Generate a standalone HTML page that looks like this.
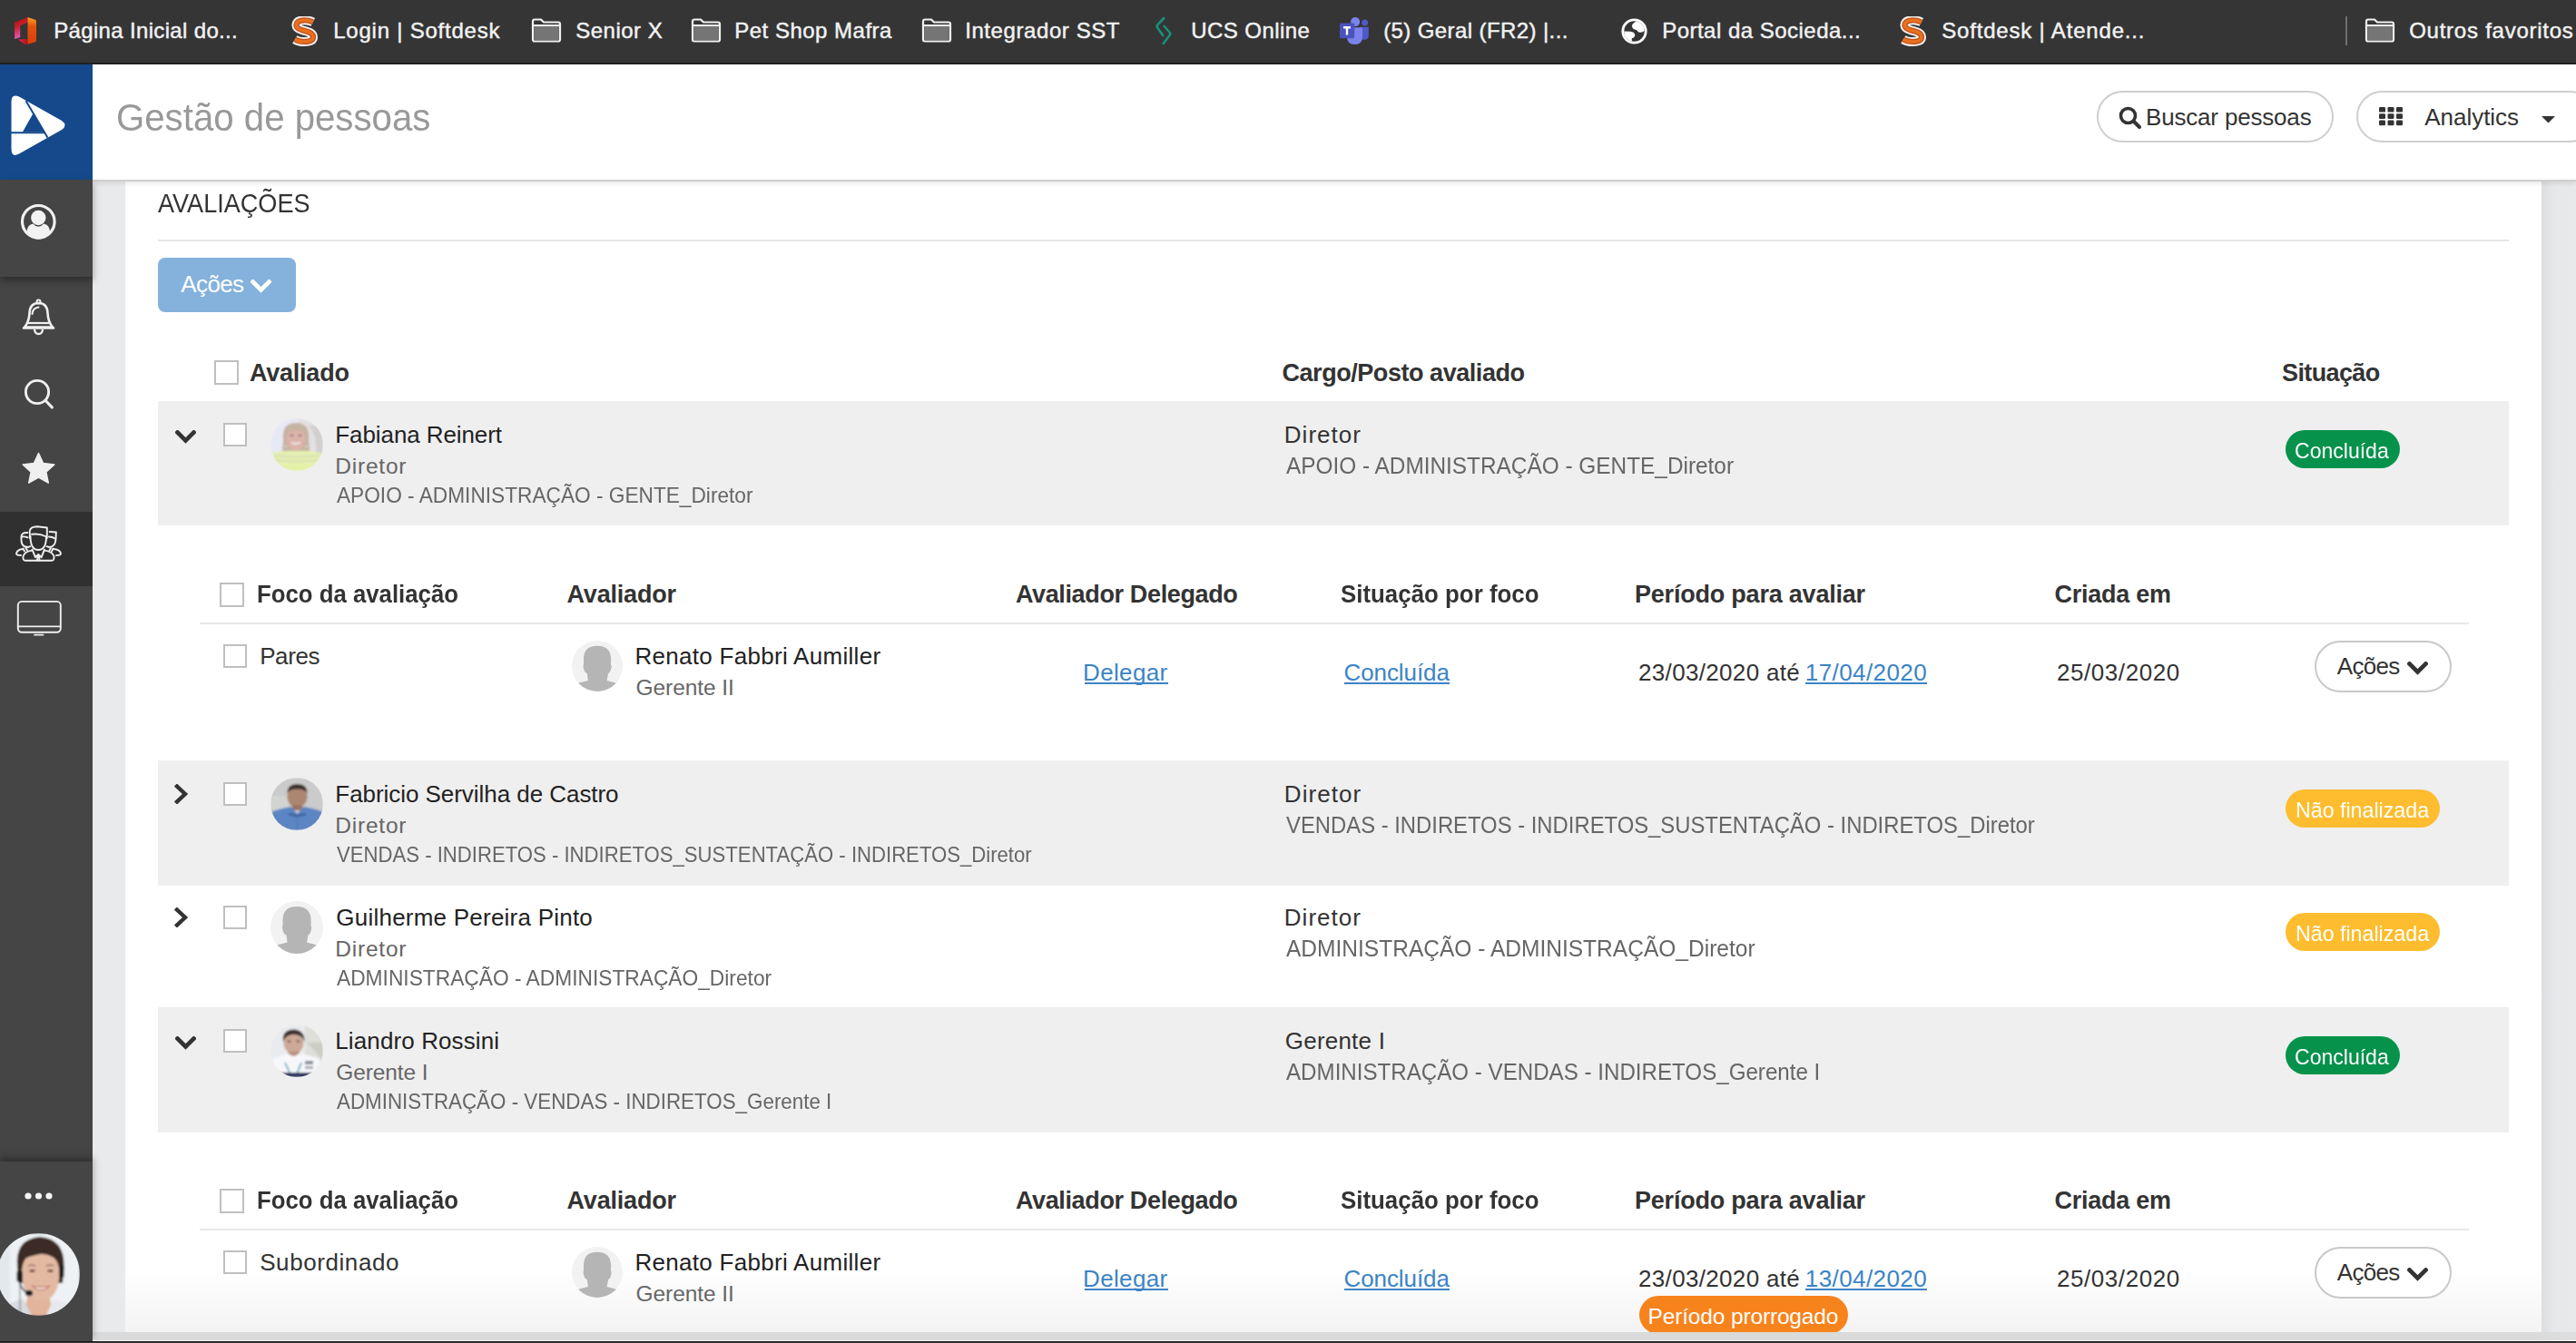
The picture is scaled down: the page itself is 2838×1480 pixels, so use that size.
<!DOCTYPE html><html><head><meta charset="utf-8"><style>
html,body{margin:0;padding:0;width:2838px;height:1480px;overflow:hidden;background:#e9eaec;font-family:'Liberation Sans', sans-serif}
.ab{position:absolute;line-height:0}
.ab svg{display:block}
.t{position:absolute;white-space:pre;font-family:'Liberation Sans', sans-serif}
.cb{position:absolute;border:2px solid #bfbfbf;background:#fff}
.ob{position:absolute;border:2px solid #c9c9c9;border-radius:30px;background:#fff}
.bx{position:absolute}
</style></head><body>
<div class="bx" style="left:0;top:0;width:2838px;height:69px;background:#353535"></div>
<div class="bx" style="left:0;top:69px;width:2838px;height:2px;background:#202020"></div>
<div class="ab" style="left:10px;top:15px"><svg width="40" height="40" viewBox="0 0 40 40"><defs>
<linearGradient id="ogr" x1="0" y1="0" x2="0" y2="1"><stop offset="0" stop-color="#f7a21e"/><stop offset="0.35" stop-color="#e5500e"/><stop offset="1" stop-color="#d9400a"/></linearGradient>
<linearGradient id="ogl" x1="0" y1="0" x2="0.3" y2="1"><stop offset="0" stop-color="#a30f14"/><stop offset="0.45" stop-color="#c81e2c"/><stop offset="1" stop-color="#e65fc0"/></linearGradient>
<linearGradient id="ogb" x1="0" y1="0" x2="1" y2="0"><stop offset="0" stop-color="#f52a4e"/><stop offset="1" stop-color="#a8101c"/></linearGradient></defs>
<path d="M6 9.8 L20.5 3.9 V9.8 L12.2 13.1 V25.9 L6 28 Z" fill="url(#ogl)"/>
<path d="M10 28.6 L20.5 28 V33.7 L17.5 33.9 Z" fill="url(#ogb)"/>
<path d="M20.5 3.9 L29 6.8 Q30 7.3 30 8.5 V30 Q30 31 29 31.3 L20.5 33.7 Z" fill="url(#ogr)"/>
</svg></div>
<div class="ab" style="left:320px;top:17.6px"><svg width="34" height="34" viewBox="0 0 34 34"><path d="M24.8 6.4 Q20 4 14.5 4.3 Q6.6 4.7 6.4 9.8 Q6.4 13.2 13 15.2 L18.5 16.8 Q25 18.7 25 22.8 Q25 28 15 28 Q9 28 4.8 25.4" fill="none" stroke="#f6f1f1" stroke-width="10" stroke-linecap="butt" stroke-linejoin="round"/><path d="M24.8 6.4 Q20 4 14.5 4.3 Q6.6 4.7 6.4 9.8 Q6.4 13.2 13 15.2 L18.5 16.8 Q25 18.7 25 22.8 Q25 28 15 28 Q9 28 4.8 25.4" fill="none" stroke="#c0521a" stroke-width="6.2" stroke-linecap="butt"/><path d="M24.8 6.4 Q20 4 14.5 4.3 Q6.6 4.7 6.4 9.8 Q6.4 13.2 13 15.2 L18.5 16.8 Q25 18.7 25 22.8 Q25 28 15 28 Q9 28 4.8 25.4" fill="none" stroke="#e8701f" stroke-width="3.6"/></svg></div>
<div class="ab" style="left:585px;top:20px"><svg width="34" height="27" viewBox="0 0 34 27"><path d="M2 3.5 Q2 1.5 4 1.5 H11 L14 4.5 H30 Q32 4.5 32 6.5 V23.5 Q32 25.5 30 25.5 H4 Q2 25.5 2 23.5 Z" fill="none" stroke="#f2f2f2" stroke-width="2.2"/><rect x="3.2" y="9" width="27.6" height="15.3" fill="#757575"/><line x1="2" y1="8" x2="32" y2="8" stroke="#f2f2f2" stroke-width="2"/></svg></div>
<div class="ab" style="left:761px;top:20px"><svg width="34" height="27" viewBox="0 0 34 27"><path d="M2 3.5 Q2 1.5 4 1.5 H11 L14 4.5 H30 Q32 4.5 32 6.5 V23.5 Q32 25.5 30 25.5 H4 Q2 25.5 2 23.5 Z" fill="none" stroke="#f2f2f2" stroke-width="2.2"/><rect x="3.2" y="9" width="27.6" height="15.3" fill="#757575"/><line x1="2" y1="8" x2="32" y2="8" stroke="#f2f2f2" stroke-width="2"/></svg></div>
<div class="ab" style="left:1015px;top:20px"><svg width="34" height="27" viewBox="0 0 34 27"><path d="M2 3.5 Q2 1.5 4 1.5 H11 L14 4.5 H30 Q32 4.5 32 6.5 V23.5 Q32 25.5 30 25.5 H4 Q2 25.5 2 23.5 Z" fill="none" stroke="#f2f2f2" stroke-width="2.2"/><rect x="3.2" y="9" width="27.6" height="15.3" fill="#757575"/><line x1="2" y1="8" x2="32" y2="8" stroke="#f2f2f2" stroke-width="2"/></svg></div>
<div class="ab" style="left:1270px;top:16px"><svg width="24" height="36" viewBox="0 0 24 36"><path d="M12.2 4 L5.3 11.5 Q3.8 13.3 5.5 15 L11.2 23" fill="none" stroke="#17917a" stroke-width="2.6" stroke-linecap="round" stroke-linejoin="round"/><path d="M12.7 13 L18.5 19.5 Q20 21.3 18.5 23 L11.7 32" fill="none" stroke="#17917a" stroke-width="2.6" stroke-linecap="round" stroke-linejoin="round"/></svg></div>
<div class="ab" style="left:1474px;top:17px"><svg width="36" height="34" viewBox="0 0 36 34"><circle cx="29.7" cy="8.1" r="3.5" fill="#5059c9"/><path d="M24 12.7 H33.8 V22 Q33.8 26.8 29 26.8 Q24 26.8 24 22 Z" fill="#5059c9"/><circle cx="19.1" cy="7.1" r="5" fill="#7b83eb"/><path d="M10 13.2 H27 V24 Q27 31.9 18.5 31.9 Q10 31.9 10 24 Z" fill="#7b83eb"/><rect x="2" y="8.6" width="16.2" height="16.7" rx="1.5" fill="#4b53bc"/><path d="M6 13.2 H14 M10 13.2 V21.5" stroke="#fff" stroke-width="2.4"/></svg></div>
<div class="ab" style="left:1784.5px;top:18.5px"><svg width="31" height="31" viewBox="0 0 31 31"><clipPath id="gcl"><circle cx="15.5" cy="15.5" r="11.2"/></clipPath><circle cx="15.5" cy="15.5" r="14.1" fill="#fff"/><circle cx="15.5" cy="15.5" r="11.2" fill="#353535"/><g clip-path="url(#gcl)" fill="#fff"><path d="M16.8 3.5 L16.77 4.9 Q12.5 7.5 13.05 10.1 Q13.3 13.3 18.26 14.2 Q19.5 16.8 22 16.8 Q25 16.5 26.5 15 L28 3 Z"/><path d="M2 15.3 L11.56 15.7 Q16 16.5 16.2 19.5 Q16.4 22.5 12.68 23.15 L13.05 28 L2 28 Z"/></g></svg></div>
<div class="ab" style="left:2092px;top:17.6px"><svg width="34" height="34" viewBox="0 0 34 34"><path d="M24.8 6.4 Q20 4 14.5 4.3 Q6.6 4.7 6.4 9.8 Q6.4 13.2 13 15.2 L18.5 16.8 Q25 18.7 25 22.8 Q25 28 15 28 Q9 28 4.8 25.4" fill="none" stroke="#f6f1f1" stroke-width="10" stroke-linecap="butt" stroke-linejoin="round"/><path d="M24.8 6.4 Q20 4 14.5 4.3 Q6.6 4.7 6.4 9.8 Q6.4 13.2 13 15.2 L18.5 16.8 Q25 18.7 25 22.8 Q25 28 15 28 Q9 28 4.8 25.4" fill="none" stroke="#c0521a" stroke-width="6.2" stroke-linecap="butt"/><path d="M24.8 6.4 Q20 4 14.5 4.3 Q6.6 4.7 6.4 9.8 Q6.4 13.2 13 15.2 L18.5 16.8 Q25 18.7 25 22.8 Q25 28 15 28 Q9 28 4.8 25.4" fill="none" stroke="#e8701f" stroke-width="3.6"/></svg></div>
<div class="bx" style="left:2584px;top:18px;width:1.5px;height:32px;background:#6e6e6e"></div>
<div class="ab" style="left:2605px;top:20px"><svg width="34" height="27" viewBox="0 0 34 27"><path d="M2 3.5 Q2 1.5 4 1.5 H11 L14 4.5 H30 Q32 4.5 32 6.5 V23.5 Q32 25.5 30 25.5 H4 Q2 25.5 2 23.5 Z" fill="none" stroke="#f2f2f2" stroke-width="2.2"/><rect x="3.2" y="9" width="27.6" height="15.3" fill="#757575"/><line x1="2" y1="8" x2="32" y2="8" stroke="#f2f2f2" stroke-width="2"/></svg></div>
<div class="bx" style="left:138px;top:198px;width:2662px;height:1270px;background:linear-gradient(to bottom,#fff 0,#fff 1200px,#f3f3f3 1270px)"></div>
<div class="bx" style="left:102px;top:1477px;width:2736px;height:1px;background:#f4f4f4"></div><div class="bx" style="left:0;top:1478px;width:2838px;height:1px;background:#1a1a1a"></div><div class="bx" style="left:0;top:1479px;width:2838px;height:1px;background:#3a3a3a"></div>
<div class="bx" style="left:2800px;top:198px;width:38px;height:1270px;background:linear-gradient(to right,#dddee1 0,#e7e8ea 14px,#e8e9eb 38px)"></div>
<div class="bx" style="left:102px;top:1468px;width:2736px;height:9px;background:linear-gradient(to right,#dadada 0,#dadada 2680px,#e4e4e4 2838px)"></div>
<div class="bx" style="left:102px;top:71px;width:2736px;height:127px;background:#fff;box-shadow:0 2px 0 #cfcfcf,0 4px 5px rgba(0,0,0,0.10)"></div>
<div class="bx" style="left:2310px;top:100px;width:257px;height:53px;border:2px solid #cfcfcf;border-radius:30px;background:#fff"></div>
<div class="bx" style="left:2596px;top:100px;width:260px;height:53px;border:2px solid #cfcfcf;border-radius:30px;background:#fff"></div>
<div class="ab" style="left:2334px;top:117px"><svg width="26" height="26" viewBox="0 0 26 26"><circle cx="10.5" cy="10.5" r="8" fill="none" stroke="#333" stroke-width="3.6"/><path d="M16.5 16.5 L23 23" stroke="#333" stroke-width="4" stroke-linecap="round"/></svg></div>
<div class="ab" style="left:2620px;top:117px"><svg width="28" height="23" viewBox="0 0 28 23"><rect x="1.0" y="1.0" width="7" height="5.6" rx="1.2" fill="#333"/><rect x="10.5" y="1.0" width="7" height="5.6" rx="1.2" fill="#333"/><rect x="20.0" y="1.0" width="7" height="5.6" rx="1.2" fill="#333"/><rect x="1.0" y="8.3" width="7" height="5.6" rx="1.2" fill="#333"/><rect x="10.5" y="8.3" width="7" height="5.6" rx="1.2" fill="#333"/><rect x="20.0" y="8.3" width="7" height="5.6" rx="1.2" fill="#333"/><rect x="1.0" y="15.6" width="7" height="5.6" rx="1.2" fill="#333"/><rect x="10.5" y="15.6" width="7" height="5.6" rx="1.2" fill="#333"/><rect x="20.0" y="15.6" width="7" height="5.6" rx="1.2" fill="#333"/></svg></div>
<div class="ab" style="left:2799px;top:127px"><svg width="17" height="9" viewBox="0 0 17 9"><path d="M1 1 H16 L8.5 8.5 Z" fill="#333"/></svg></div>
<div class="bx" style="left:0;top:71px;width:102px;height:1407px;background:#454545"></div>
<div class="bx" style="left:0;top:71px;width:102px;height:127px;background:#15498b"></div>
<div class="bx" style="left:0;top:198px;width:102px;height:107px;background:#454545;box-shadow:0 4px 8px rgba(0,0,0,0.35)"></div>
<div class="bx" style="left:0;top:564px;width:102px;height:82px;background:#303030"></div>
<div class="bx" style="left:0;top:1280px;width:102px;height:198px;background:#454545;box-shadow:0 -4px 8px rgba(0,0,0,0.35)"></div>
<div class="ab" style="left:0;top:90px"><svg width="90" height="100" viewBox="0 0 90 100"><path d="M12.5 22 Q12.5 13 21 16.5 L68 43 Q75 48 68 53 L21 79.5 Q12.5 84 12.5 74 Z" fill="#fff"/>
<path d="M36.5 35 L24.9 55.5 L49.1 55.5 Z" fill="#15498b"/>
<path d="M12 56.2 H50" stroke="#15498b" stroke-width="2"/>
<path d="M28.5 21 L52.5 61.8" stroke="#15498b" stroke-width="2"/></svg></div>
<div class="ab" style="left:22px;top:224px"><svg width="41" height="41" viewBox="0 0 41 41"><circle cx="20.3" cy="20.3" r="17.8" fill="none" stroke="#f2f2f2" stroke-width="3.1"/><circle cx="20.3" cy="16" r="8.2" fill="#f2f2f2"/><path d="M7.3 33.5 Q7.5 23.5 14.5 22.5 Q17 25.8 20.3 25.8 Q23.6 25.8 26.1 22.5 Q33 23.5 33.3 33.5 Q27.5 39.5 20.3 39.5 Q13 39.5 7.3 33.5 Z" fill="#f2f2f2"/></svg></div>
<div class="ab" style="left:24px;top:329px"><svg width="37" height="41" viewBox="0 0 37 41"><path d="M18.5 5 Q28 5 28.5 16 Q29 26 34 31.5 H3 Q8 26 8.5 16 Q9 5 18.5 5Z" fill="none" stroke="#f0f0f0" stroke-width="2.6" stroke-linejoin="round"/><path d="M2 32.5 H35" stroke="#f0f0f0" stroke-width="2.6" stroke-linecap="round"/><circle cx="18.5" cy="3.5" r="2" fill="none" stroke="#f0f0f0" stroke-width="2"/><path d="M14 34 Q14.5 39 18.5 39 Q22.5 39 23 34" fill="none" stroke="#f0f0f0" stroke-width="2.4"/><path d="M7 27 H30" stroke="#f0f0f0" stroke-width="2.2"/><path d="M11.5 17 Q12 10.5 18.5 9.6" fill="none" stroke="#f0f0f0" stroke-width="2" stroke-linecap="round"/></svg></div>
<div class="ab" style="left:25px;top:417px"><svg width="35" height="35" viewBox="0 0 35 35"><circle cx="16" cy="15" r="12.6" fill="none" stroke="#f0f0f0" stroke-width="2.9"/><path d="M25.2 24.5 L32.3 31.8" stroke="#f0f0f0" stroke-width="3.2" stroke-linecap="round"/></svg></div>
<div class="ab" style="left:23px;top:498px"><svg width="39" height="38" viewBox="0 0 39 38"><path d="M19.5 1.5 L24.6 12.6 L36.8 13.9 L27.8 22.1 L30.3 34.1 L19.5 28 L8.7 34.1 L11.2 22.1 L2.2 13.9 L14.4 12.6 Z" fill="#f0f0f0" stroke="#f0f0f0" stroke-width="1.5" stroke-linejoin="round"/></svg></div>
<div class="ab" style="left:10px;top:570px"><svg width="65" height="60" viewBox="0 0 65 60"><g fill="none" stroke="#f0f0f0" stroke-width="1.9" stroke-linejoin="round" stroke-linecap="round">
<path d="M22.8 23 L22.8 15 Q23.5 10.5 31 10.3 L41.8 11.5 L41.8 23"/>
<path d="M23.5 21 Q23.5 36 32.2 36 Q41 36 41 21"/>
<path d="M25 18.8 Q33 17.5 40 21"/>
<path d="M20.3 17 Q13.4 16.5 13.4 22 L13.6 27 Q14.5 33 21 33 L23.2 32.2"/>
<path d="M14 21.5 Q18 21 20.5 22.3"/>
<path d="M44.7 16 L51.8 16.5 L51.5 24 Q51 33 44 33 L41.5 32.2"/>
<path d="M44 21.5 Q48 21.5 50.5 23.5"/>
<path d="M25 36.6 Q17 38 15.5 43 Q15 47.8 18 47.8 H47 Q50 47.8 49.5 43 Q48 38 39.3 36.6"/>
<path d="M25.5 35.7 L29 44.2 L32.2 41 L35.7 44.2 L38.9 35.7"/>
<path d="M31 47.5 L31.5 43 H33 L33.5 47.5"/>
<path d="M15 35 Q8.5 36 8 40 Q8 42 13 42"/><path d="M15.5 34.5 L17 37.5 M18.5 34 L20 36.5"/>
<path d="M49.5 35 Q56.5 36 57 40 Q57 42 52 42"/><path d="M48.5 34.5 L47 37.5 M46 34 L44.5 36.5"/>
</g></svg></div>
<div class="ab" style="left:17px;top:661px"><svg width="51" height="42" viewBox="0 0 51 42"><rect x="2.8" y="1.9" width="47" height="33.8" rx="4.2" fill="none" stroke="#f0f0f0" stroke-width="1.9"/><path d="M2.8 29.4 H49.8" stroke="#f0f0f0" stroke-width="1.8"/><path d="M21 38.6 H30.5" stroke="#f0f0f0" stroke-width="1.8" stroke-linecap="round"/></svg></div>
<div class="ab" style="left:27px;top:1313px"><svg width="32" height="10" viewBox="0 0 32 10"><circle cx="4" cy="5" r="3.6" fill="#f4f4f4"/><circle cx="15.5" cy="5" r="3.6" fill="#f4f4f4"/><circle cx="27" cy="5" r="3.6" fill="#f4f4f4"/></svg></div>
<div class="ab" style="left:-3px;top:1359px"><svg width="91" height="91" viewBox="0 0 91 91"><defs><filter id="sbl" x="-5%" y="-5%" width="110%" height="110%"><feGaussianBlur stdDeviation="1"/></filter></defs><clipPath id="sav"><circle cx="45.5" cy="45.5" r="45.5"/></clipPath><g clip-path="url(#sav)"><g filter="url(#sbl)">
<rect width="91" height="91" fill="#eef2f4"/><rect x="0" width="14" height="91" fill="#e2e8ec"/>
<path d="M22 38 Q19 6 47 4 Q74 6 73.5 36 L72 55 L24 55 Z" fill="#3b2b25"/>
<path d="M33 64 H61 L58 72 L62 91 H28 L33 72 Z" fill="#e2b49c"/>
<path d="M27 44 Q27 22 47 20 Q68 22 68.5 44 Q68 66 57 72 Q48 76 39 72 Q28 66 27 44Z" fill="#e3b9a2"/>
<path d="M26 30 Q34 12 52 14 Q66 17 69 34 Q60 22 48 23 Q35 25 26 30Z" fill="#3b2b25"/>
<ellipse cx="38.5" cy="41.5" rx="3.2" ry="1.5" fill="#6b4b42"/><ellipse cx="58.5" cy="41.5" rx="3.2" ry="1.5" fill="#6b4b42"/>
<path d="M34 36 Q38 34 42 36 M54 36 Q58 34 62 36" stroke="#6a4a40" stroke-width="1.2" fill="none"/>
<path d="M38 58 Q48 67 58 58 Q48 61 38 58Z" fill="#fff" stroke="#c77b6b" stroke-width="1.3"/>
<path d="M0 91 L6 82 Q16 76 28 72 L38 91 Z" fill="#d6dbe0"/><path d="M91 91 L86 82 Q74 76 62 72 L54 91 Z" fill="#e6eaee"/>
<rect x="21.5" y="41" width="6.5" height="13" rx="3" fill="#1f1f1f"/><rect x="68" y="35" width="5.5" height="14" rx="2.5" fill="#1f1f1f"/>
<path d="M24.5 54 Q27 63 34 66" stroke="#222" stroke-width="1.5" fill="none"/><ellipse cx="35" cy="66" rx="4.2" ry="3.2" fill="#1a1a1a"/>
<path d="M25 55 V91" stroke="#555" stroke-width="0.8"/>
</g></g></svg></div>
<div class="bx" style="left:174px;top:264px;width:2590px;height:2px;background:#e5e5e5"></div>
<div class="bx" style="left:174px;top:284px;width:152px;height:60px;border-radius:8px;background:#84b2dc"></div>
<div class="ab" style="left:276px;top:308px"><svg width="23" height="15" viewBox="0 0 23 15"><path d="M2.5 2.5 L11.5 11.5 L20.5 2.5" fill="none" stroke="#fff" stroke-width="4.6" stroke-linecap="square" stroke-linejoin="miter"/></svg></div>
<div class="cb" style="left:236px;top:397px;width:23px;height:23px"></div>
<div class="bx" style="left:174px;top:442px;width:2590px;height:137px;background:#efefef"></div>
<div class="bx" style="left:174px;top:838px;width:2590px;height:138px;background:#efefef"></div>
<div class="bx" style="left:174px;top:1110px;width:2590px;height:138px;background:#efefef"></div>
<div class="ab" style="left:193px;top:474px"><svg width="23" height="15" viewBox="0 0 23 15"><path d="M2.5 2.5 L11.5 11.5 L20.5 2.5" fill="none" stroke="#333" stroke-width="4.6" stroke-linecap="square" stroke-linejoin="miter"/></svg></div>
<div class="cb" style="left:246px;top:466px;width:22px;height:22px"></div>
<div class="ab" style="left:192px;top:864px"><svg width="16" height="22" viewBox="0 0 16 22"><path d="M3 2.5 L12 11 L3 19.5" fill="none" stroke="#333" stroke-width="4.4" stroke-linecap="square"/></svg></div>
<div class="cb" style="left:246px;top:862px;width:22px;height:22px"></div>
<div class="ab" style="left:192px;top:1000px"><svg width="16" height="22" viewBox="0 0 16 22"><path d="M3 2.5 L12 11 L3 19.5" fill="none" stroke="#333" stroke-width="4.4" stroke-linecap="square"/></svg></div>
<div class="cb" style="left:246px;top:998px;width:22px;height:22px"></div>
<div class="ab" style="left:193px;top:1142px"><svg width="23" height="15" viewBox="0 0 23 15"><path d="M2.5 2.5 L11.5 11.5 L20.5 2.5" fill="none" stroke="#333" stroke-width="4.6" stroke-linecap="square" stroke-linejoin="miter"/></svg></div>
<div class="cb" style="left:246px;top:1134px;width:22px;height:22px"></div>
<div class="ab" style="left:298px;top:461px"><svg width="58" height="58" viewBox="0 0 58 58"><defs><filter id="bl0" x="-10%" y="-10%" width="120%" height="120%"><feGaussianBlur stdDeviation="0.9"/></filter></defs><clipPath id="cp0"><circle cx="29" cy="29" r="29"/></clipPath><g clip-path="url(#cp0)"><g filter="url(#bl0)"><rect width="58" height="58" fill="#e8e9f6"/><rect x="30" width="28" height="58" fill="#e4e1e2"/><path d="M42 8 Q52 20 50 40 L58 40 V8Z" fill="#d3cfcf"/>
<path d="M14 24 Q12 5 28 5 Q44 5 42 24 L43 36 L13 36 Z" fill="#c4b4a2"/>
<ellipse cx="28" cy="23" rx="10.5" ry="12.5" fill="#dcb3a8"/>
<path d="M18 16 Q28 9 38 16 L38 11 Q28 6 18 11Z" fill="#c4b4a2"/>
<ellipse cx="23.5" cy="19" rx="2.2" ry="1" fill="#8d7080"/><ellipse cx="32.5" cy="19" rx="2.2" ry="1" fill="#8d7080"/>
<path d="M23 26.5 Q28 29.5 33 26.5" stroke="#f4eaea" stroke-width="2" fill="none"/>
<circle cx="16.5" cy="31" r="1" fill="#e6e6e6"/><circle cx="39.5" cy="31" r="1" fill="#e6e6e6"/>
<path d="M0 58 L2 38 Q14 35 28 36 Q42 35 56 38 L58 58 Z" fill="#e4f0b0"/>
<path d="M4 41 Q28 44 54 41 M3 46 Q28 49 55 46" stroke="#d8dcb4" stroke-width="1.4" fill="none"/>
<rect x="0" y="51" width="58" height="7" fill="#e3f3a6"/></g></g></svg></div>
<div class="ab" style="left:298px;top:857px"><svg width="58" height="58" viewBox="0 0 58 58"><defs><filter id="bl1" x="-10%" y="-10%" width="120%" height="120%"><feGaussianBlur stdDeviation="0.9"/></filter></defs><clipPath id="cp1"><circle cx="29" cy="29" r="29"/></clipPath><g clip-path="url(#cp1)"><g filter="url(#bl1)"><rect width="58" height="58" fill="#cbcbcb"/><rect x="0" y="20" width="20" height="20" fill="#d2d4d2"/>
<ellipse cx="29.5" cy="21" rx="11" ry="12" fill="#ad8672"/>
<path d="M18.5 17 Q18.5 7 29.5 7 Q40.5 7 40.5 17 Q38 12.5 29.5 12.5 Q21 12.5 18.5 17Z" fill="#3b322e"/>
<rect x="24" y="30" width="11" height="6" fill="#9c7563"/>
<path d="M0 58 L2 37 Q15 33 23 32 L29.5 40 L36 32 Q44 33 57 37 L58 58 Z" fill="#5b85c4"/>
<path d="M20 40 L29.5 42 L39 40" stroke="#3c5f9c" stroke-width="2.5" fill="none"/>
<path d="M29.5 42 V58" stroke="#4a6fae" stroke-width="1"/></g></g></svg></div>
<div class="ab" style="left:298px;top:993px"><svg width="58" height="58" viewBox="0 0 58 58"><clipPath id="cpd298993"><circle cx="29" cy="29" r="29"/></clipPath><g clip-path="url(#cpd298993)"><rect width="58" height="58" fill="#f2f2f2"/><path fill="#b5b5b5" d="M13.5 21 Q13.5 6 29 6 Q44.7 6 44.7 22 L44.5 27 Q45.6 28.5 45 31 Q44 36 41.5 37.5 L40 45.5 Q48 47.5 56 50 L58 58 L0 58 L2 50 Q10 47.5 18.5 45.5 L17.5 37.5 Q14 36 13.3 31 Q12.6 28.5 13.5 27 Z"/></g></svg></div>
<div class="ab" style="left:298px;top:1129px"><svg width="58" height="58" viewBox="0 0 58 58"><defs><filter id="bl3" x="-10%" y="-10%" width="120%" height="120%"><feGaussianBlur stdDeviation="0.9"/></filter></defs><clipPath id="cp3"><circle cx="29" cy="29" r="29"/></clipPath><g clip-path="url(#cp3)"><g filter="url(#bl3)"><rect width="58" height="58" fill="#e9ebef"/><rect x="38" y="0" width="20" height="58" fill="#dedfd9"/><path d="M40 20 Q50 30 58 40 V20Z" fill="#cdcdc4"/>
<ellipse cx="25.5" cy="20" rx="11" ry="12.5" fill="#cba897"/>
<path d="M14 19 Q12 6 25.5 5.5 Q38 6 37.5 19 Q35 11 25.5 11 Q17 11 14 19Z" fill="#3a302d"/>
<ellipse cx="20.5" cy="18.5" rx="2" ry="1" fill="#6a4c48"/><ellipse cx="30.5" cy="18.5" rx="2" ry="1" fill="#6a4c48"/>
<rect x="19" y="30" width="13" height="6" fill="#b9917f"/>
<path d="M0 58 L3 38 Q14 33 20 32 Q25.5 38 31 32 Q40 33 54 38 L58 58 Z" fill="#f7f7fa"/>
<path d="M16 42 L23 57 M34 42 L28 57" stroke="#4fa0b8" stroke-width="1.7"/>
<rect x="38" y="40" width="9" height="4" fill="#8a8f98"/><rect x="38" y="46" width="9" height="3" fill="#a6a9b0"/>
<rect x="0" y="53" width="58" height="5" fill="#2d3560"/></g></g></svg></div>
<div class="bx" style="left:2518px;top:474px;width:126px;height:42px;border-radius:22px;background:#07924b"></div>
<div class="bx" style="left:2518px;top:870px;width:170px;height:42px;border-radius:22px;background:#fdbd2f"></div>
<div class="bx" style="left:2518px;top:1006px;width:170px;height:42px;border-radius:22px;background:#fdbd2f"></div>
<div class="bx" style="left:2518px;top:1142px;width:126px;height:42px;border-radius:22px;background:#07924b"></div>
<div class="bx" style="left:1806px;top:1428px;width:230px;height:40px;overflow:hidden"><div style="width:230px;height:42px;border-radius:22px;background:#f7831d"></div></div>
<div class="cb" style="left:242px;top:642px;width:23px;height:23px"></div>
<div class="bx" style="left:220px;top:686px;width:2500px;height:2px;background:#e8e8e8"></div>
<div class="cb" style="left:246px;top:710px;width:22px;height:22px"></div>
<div class="ab" style="left:630px;top:706px"><svg width="56" height="56" viewBox="0 0 58 58"><clipPath id="cpd630706"><circle cx="29" cy="29" r="29"/></clipPath><g clip-path="url(#cpd630706)"><rect width="58" height="58" fill="#f2f2f2"/><path fill="#b5b5b5" d="M13.5 21 Q13.5 6 29 6 Q44.7 6 44.7 22 L44.5 27 Q45.6 28.5 45 31 Q44 36 41.5 37.5 L40 45.5 Q48 47.5 56 50 L58 58 L0 58 L2 50 Q10 47.5 18.5 45.5 L17.5 37.5 Q14 36 13.3 31 Q12.6 28.5 13.5 27 Z"/></g></svg></div>
<div class="ob" style="left:2550px;top:706px;width:147px;height:53px"></div><div class="ab" style="left:2652px;top:729px"><svg width="23" height="15" viewBox="0 0 23 15"><path d="M2.5 2.5 L11.5 11.5 L20.5 2.5" fill="none" stroke="#333" stroke-width="4.6" stroke-linecap="square" stroke-linejoin="miter"/></svg></div>
<div class="bx" style="left:1195px;top:752px;width:92px;height:2px;background:#3b84c6"></div>
<div class="bx" style="left:1481px;top:752px;width:116px;height:2px;background:#3b84c6"></div>
<div class="bx" style="left:1989px;top:752px;width:134px;height:2px;background:#3b84c6"></div>
<div class="cb" style="left:242px;top:1310px;width:23px;height:23px"></div>
<div class="bx" style="left:220px;top:1354px;width:2500px;height:2px;background:#e8e8e8"></div>
<div class="cb" style="left:246px;top:1378px;width:22px;height:22px"></div>
<div class="ab" style="left:630px;top:1374px"><svg width="56" height="56" viewBox="0 0 58 58"><clipPath id="cpd6301374"><circle cx="29" cy="29" r="29"/></clipPath><g clip-path="url(#cpd6301374)"><rect width="58" height="58" fill="#f2f2f2"/><path fill="#b5b5b5" d="M13.5 21 Q13.5 6 29 6 Q44.7 6 44.7 22 L44.5 27 Q45.6 28.5 45 31 Q44 36 41.5 37.5 L40 45.5 Q48 47.5 56 50 L58 58 L0 58 L2 50 Q10 47.5 18.5 45.5 L17.5 37.5 Q14 36 13.3 31 Q12.6 28.5 13.5 27 Z"/></g></svg></div>
<div class="ob" style="left:2550px;top:1374px;width:147px;height:53px"></div><div class="ab" style="left:2652px;top:1397px"><svg width="23" height="15" viewBox="0 0 23 15"><path d="M2.5 2.5 L11.5 11.5 L20.5 2.5" fill="none" stroke="#333" stroke-width="4.6" stroke-linecap="square" stroke-linejoin="miter"/></svg></div>
<div class="bx" style="left:1195px;top:1420px;width:92px;height:2px;background:#3b84c6"></div>
<div class="bx" style="left:1481px;top:1420px;width:116px;height:2px;background:#3b84c6"></div>
<div class="bx" style="left:1989px;top:1420px;width:134px;height:2px;background:#3b84c6"></div>
<div class="t" style="left:59.2px;top:22.0px;font-size:24px;line-height:24px;font-weight:400;color:#f2f2f2;letter-spacing:0.34px;-webkit-text-stroke:0.45px #f2f2f2">Página Inicial do...</div>
<div class="t" style="left:367.2px;top:22.0px;font-size:24px;line-height:24px;font-weight:400;color:#f2f2f2;letter-spacing:0.77px;-webkit-text-stroke:0.45px #f2f2f2">Login | Softdesk</div>
<div class="t" style="left:634.2px;top:22.0px;font-size:24px;line-height:24px;font-weight:400;color:#f2f2f2;letter-spacing:0.51px;-webkit-text-stroke:0.45px #f2f2f2">Senior X</div>
<div class="t" style="left:809.2px;top:22.0px;font-size:24px;line-height:24px;font-weight:400;color:#f2f2f2;letter-spacing:0.50px;-webkit-text-stroke:0.45px #f2f2f2">Pet Shop Mafra</div>
<div class="t" style="left:1063.2px;top:22.0px;font-size:24px;line-height:24px;font-weight:400;color:#f2f2f2;letter-spacing:0.58px;-webkit-text-stroke:0.45px #f2f2f2">Integrador SST</div>
<div class="t" style="left:1312.2px;top:22.0px;font-size:24px;line-height:24px;font-weight:400;color:#f2f2f2;letter-spacing:0.45px;-webkit-text-stroke:0.45px #f2f2f2">UCS Online</div>
<div class="t" style="left:1524.2px;top:22.0px;font-size:24px;line-height:24px;font-weight:400;color:#f2f2f2;letter-spacing:0.40px;-webkit-text-stroke:0.45px #f2f2f2">(5) Geral (FR2) |...</div>
<div class="t" style="left:1831.2px;top:22.0px;font-size:24px;line-height:24px;font-weight:400;color:#f2f2f2;letter-spacing:0.48px;-webkit-text-stroke:0.45px #f2f2f2">Portal da Socieda...</div>
<div class="t" style="left:2139.2px;top:22.0px;font-size:24px;line-height:24px;font-weight:400;color:#f2f2f2;letter-spacing:0.82px;-webkit-text-stroke:0.45px #f2f2f2">Softdesk | Atende...</div>
<div class="t" style="left:2654.2px;top:22.0px;font-size:24px;line-height:24px;font-weight:400;color:#f2f2f2;letter-spacing:0.75px;-webkit-text-stroke:0.45px #f2f2f2">Outros favoritos</div>
<div class="t" style="left:128.1px;top:109.4px;font-size:42px;line-height:42px;font-weight:400;color:#999;transform:scaleX(0.9571);transform-origin:0 0">Gestão de pessoas</div>
<div class="t" style="left:2364.0px;top:116.4px;font-size:26px;line-height:26px;font-weight:400;color:#333;letter-spacing:-0.18px">Buscar pessoas</div>
<div class="t" style="left:2671.3px;top:116.4px;font-size:26px;line-height:26px;font-weight:400;color:#333;letter-spacing:-0.04px">Analytics</div>
<div class="t" style="left:174.1px;top:209.3px;font-size:30px;line-height:30px;font-weight:400;color:#333;transform:scaleX(0.9027);transform-origin:0 0">AVALIAÇÕES</div>
<div class="t" style="left:199.3px;top:300.1px;font-size:26px;line-height:26px;font-weight:400;color:#fff;letter-spacing:-0.62px">Ações</div>
<div class="t" style="left:274.9px;top:398.0px;font-size:27px;line-height:27px;font-weight:700;color:#333;letter-spacing:-0.21px">Avaliado</div>
<div class="t" style="left:1412.5px;top:398.0px;font-size:27px;line-height:27px;font-weight:700;color:#333;letter-spacing:-0.45px">Cargo/Posto avaliado</div>
<div class="t" style="left:2514.0px;top:398.0px;font-size:27px;line-height:27px;font-weight:700;color:#333;letter-spacing:-0.61px">Situação</div>
<div class="t" style="left:369.3px;top:466.0px;font-size:26px;line-height:26px;font-weight:400;color:#222;letter-spacing:-0.09px">Fabiana Reinert</div>
<div class="t" style="left:369.3px;top:502.0px;font-size:24.5px;line-height:24.5px;font-weight:400;color:#666;letter-spacing:0.78px">Diretor</div>
<div class="t" style="left:370.7px;top:534.0px;font-size:24.5px;line-height:24.5px;font-weight:400;color:#666;transform:scaleX(0.9253);transform-origin:0 0">APOIO - ADMINISTRAÇÃO - GENTE_Diretor</div>
<div class="t" style="left:1414.8px;top:466.0px;font-size:26px;line-height:26px;font-weight:400;color:#333;letter-spacing:1.03px">Diretor</div>
<div class="t" style="left:1416.8px;top:500.0px;font-size:26px;line-height:26px;font-weight:400;color:#666;transform:scaleX(0.9376);transform-origin:0 0">APOIO - ADMINISTRAÇÃO - GENTE_Diretor</div>
<div class="t" style="left:369.3px;top:862.0px;font-size:26px;line-height:26px;font-weight:400;color:#222;letter-spacing:-0.05px">Fabricio Servilha de Castro</div>
<div class="t" style="left:369.3px;top:898.0px;font-size:24.5px;line-height:24.5px;font-weight:400;color:#666;letter-spacing:0.78px">Diretor</div>
<div class="t" style="left:370.7px;top:930.0px;font-size:24.5px;line-height:24.5px;font-weight:400;color:#666;transform:scaleX(0.9033);transform-origin:0 0">VENDAS - INDIRETOS - INDIRETOS_SUSTENTAÇÃO - INDIRETOS_Diretor</div>
<div class="t" style="left:1414.8px;top:862.0px;font-size:26px;line-height:26px;font-weight:400;color:#333;letter-spacing:1.07px">Diretor</div>
<div class="t" style="left:1416.8px;top:896.0px;font-size:26px;line-height:26px;font-weight:400;color:#666;transform:scaleX(0.9168);transform-origin:0 0">VENDAS - INDIRETOS - INDIRETOS_SUSTENTAÇÃO - INDIRETOS_Diretor</div>
<div class="t" style="left:370.3px;top:998.0px;font-size:26px;line-height:26px;font-weight:400;color:#222;letter-spacing:0.23px">Guilherme Pereira Pinto</div>
<div class="t" style="left:369.3px;top:1034.0px;font-size:24.5px;line-height:24.5px;font-weight:400;color:#666;letter-spacing:0.78px">Diretor</div>
<div class="t" style="left:370.7px;top:1066.0px;font-size:24.5px;line-height:24.5px;font-weight:400;color:#666;transform:scaleX(0.9287);transform-origin:0 0">ADMINISTRAÇÃO - ADMINISTRAÇÃO_Diretor</div>
<div class="t" style="left:1414.8px;top:998.0px;font-size:26px;line-height:26px;font-weight:400;color:#333;letter-spacing:1.02px">Diretor</div>
<div class="t" style="left:1416.8px;top:1032.0px;font-size:26px;line-height:26px;font-weight:400;color:#666;transform:scaleX(0.9435);transform-origin:0 0">ADMINISTRAÇÃO - ADMINISTRAÇÃO_Diretor</div>
<div class="t" style="left:369.3px;top:1134.0px;font-size:26px;line-height:26px;font-weight:400;color:#222;letter-spacing:0.11px">Liandro Rossini</div>
<div class="t" style="left:370.3px;top:1170.0px;font-size:24.5px;line-height:24.5px;font-weight:400;color:#666;letter-spacing:-0.12px">Gerente I</div>
<div class="t" style="left:370.7px;top:1202.0px;font-size:24.5px;line-height:24.5px;font-weight:400;color:#666;transform:scaleX(0.9131);transform-origin:0 0">ADMINISTRAÇÃO - VENDAS - INDIRETOS_Gerente I</div>
<div class="t" style="left:1415.8px;top:1134.0px;font-size:26px;line-height:26px;font-weight:400;color:#333;letter-spacing:0.21px">Gerente I</div>
<div class="t" style="left:1416.8px;top:1168.0px;font-size:26px;line-height:26px;font-weight:400;color:#666;transform:scaleX(0.9282);transform-origin:0 0">ADMINISTRAÇÃO - VENDAS - INDIRETOS_Gerente I</div>
<div class="t" style="left:282.5px;top:642.0px;font-size:27px;line-height:27px;font-weight:700;color:#333;transform:scaleX(0.9543);transform-origin:0 0">Foco da avaliação</div>
<div class="t" style="left:624.5px;top:642.0px;font-size:27px;line-height:27px;font-weight:700;color:#333;letter-spacing:-0.19px">Avaliador</div>
<div class="t" style="left:1118.9px;top:642.0px;font-size:27px;line-height:27px;font-weight:700;color:#333;letter-spacing:-0.36px">Avaliador Delegado</div>
<div class="t" style="left:1477.0px;top:642.0px;font-size:27px;line-height:27px;font-weight:700;color:#333;transform:scaleX(0.9584);transform-origin:0 0">Situação por foco</div>
<div class="t" style="left:1801.0px;top:642.0px;font-size:27px;line-height:27px;font-weight:700;color:#333;letter-spacing:-0.21px">Período para avaliar</div>
<div class="t" style="left:2263.4px;top:642.0px;font-size:27px;line-height:27px;font-weight:700;color:#333;letter-spacing:-0.23px">Criada em</div>
<div class="t" style="left:286.2px;top:710.0px;font-size:26px;line-height:26px;font-weight:400;color:#333;letter-spacing:-0.42px">Pares</div>
<div class="t" style="left:699.5px;top:710.0px;font-size:26px;line-height:26px;font-weight:400;color:#222;letter-spacing:0.29px">Renato Fabbri Aumiller</div>
<div class="t" style="left:700.5px;top:746.0px;font-size:24.5px;line-height:24.5px;font-weight:400;color:#666;letter-spacing:-0.06px">Gerente II</div>
<div class="t" style="left:1193.0px;top:728.0px;font-size:26px;line-height:26px;font-weight:400;color:#3b84c6;letter-spacing:0.37px">Delegar</div>
<div class="t" style="left:1480.5px;top:728.0px;font-size:26px;line-height:26px;font-weight:400;color:#3b84c6;letter-spacing:-0.09px">Concluída</div>
<div class="t" style="left:1805.0px;top:728.0px;font-size:26px;line-height:26px;font-weight:400;color:#333;letter-spacing:0.33px">23/03/2020 até</div>
<div class="t" style="left:1988.8px;top:728.0px;font-size:26px;line-height:26px;font-weight:400;color:#3b84c6;letter-spacing:0.41px">17/04/2020</div>
<div class="t" style="left:2266.0px;top:727.5px;font-size:26px;line-height:26px;font-weight:400;color:#333;letter-spacing:0.56px">25/03/2020</div>
<div class="t" style="left:2574.8px;top:721.0px;font-size:26px;line-height:26px;font-weight:400;color:#333;letter-spacing:-0.70px">Ações</div>
<div class="t" style="left:282.5px;top:1310.0px;font-size:27px;line-height:27px;font-weight:700;color:#333;transform:scaleX(0.9543);transform-origin:0 0">Foco da avaliação</div>
<div class="t" style="left:624.5px;top:1310.0px;font-size:27px;line-height:27px;font-weight:700;color:#333;letter-spacing:-0.19px">Avaliador</div>
<div class="t" style="left:1118.9px;top:1310.0px;font-size:27px;line-height:27px;font-weight:700;color:#333;letter-spacing:-0.36px">Avaliador Delegado</div>
<div class="t" style="left:1477.0px;top:1310.0px;font-size:27px;line-height:27px;font-weight:700;color:#333;transform:scaleX(0.9584);transform-origin:0 0">Situação por foco</div>
<div class="t" style="left:1801.0px;top:1310.0px;font-size:27px;line-height:27px;font-weight:700;color:#333;letter-spacing:-0.21px">Período para avaliar</div>
<div class="t" style="left:2263.4px;top:1310.0px;font-size:27px;line-height:27px;font-weight:700;color:#333;letter-spacing:-0.23px">Criada em</div>
<div class="t" style="left:286.2px;top:1378.0px;font-size:26px;line-height:26px;font-weight:400;color:#333;letter-spacing:0.58px">Subordinado</div>
<div class="t" style="left:699.5px;top:1378.0px;font-size:26px;line-height:26px;font-weight:400;color:#222;letter-spacing:0.29px">Renato Fabbri Aumiller</div>
<div class="t" style="left:700.5px;top:1414.0px;font-size:24.5px;line-height:24.5px;font-weight:400;color:#666;letter-spacing:-0.06px">Gerente II</div>
<div class="t" style="left:1193.0px;top:1396.0px;font-size:26px;line-height:26px;font-weight:400;color:#3b84c6;letter-spacing:0.37px">Delegar</div>
<div class="t" style="left:1480.5px;top:1396.0px;font-size:26px;line-height:26px;font-weight:400;color:#3b84c6;letter-spacing:-0.09px">Concluída</div>
<div class="t" style="left:1805.0px;top:1396.0px;font-size:26px;line-height:26px;font-weight:400;color:#333;letter-spacing:0.33px">23/03/2020 até</div>
<div class="t" style="left:1988.8px;top:1396.0px;font-size:26px;line-height:26px;font-weight:400;color:#3b84c6;letter-spacing:0.41px">13/04/2020</div>
<div class="t" style="left:2266.0px;top:1395.5px;font-size:26px;line-height:26px;font-weight:400;color:#333;letter-spacing:0.56px">25/03/2020</div>
<div class="t" style="left:2574.8px;top:1389.0px;font-size:26px;line-height:26px;font-weight:400;color:#333;letter-spacing:-0.70px">Ações</div>
<div class="t" style="left:2528.4px;top:485.1px;font-size:24.5px;line-height:24.5px;font-weight:400;color:#fff;transform:scaleX(0.9404);transform-origin:0 0">Concluída</div>
<div class="t" style="left:2528.7px;top:881.2px;font-size:24.5px;line-height:24.5px;font-weight:400;color:#fff;transform:scaleX(0.9471);transform-origin:0 0">Não finalizada</div>
<div class="t" style="left:2528.7px;top:1017.2px;font-size:24.5px;line-height:24.5px;font-weight:400;color:#fff;transform:scaleX(0.9471);transform-origin:0 0">Não finalizada</div>
<div class="t" style="left:2528.4px;top:1153.1px;font-size:24.5px;line-height:24.5px;font-weight:400;color:#fff;transform:scaleX(0.9404);transform-origin:0 0">Concluída</div>
<div class="t" style="left:1815.5px;top:1438.7px;font-size:24.5px;line-height:24.5px;font-weight:400;color:#fff;letter-spacing:-0.15px">Período prorrogado</div>
</body></html>
